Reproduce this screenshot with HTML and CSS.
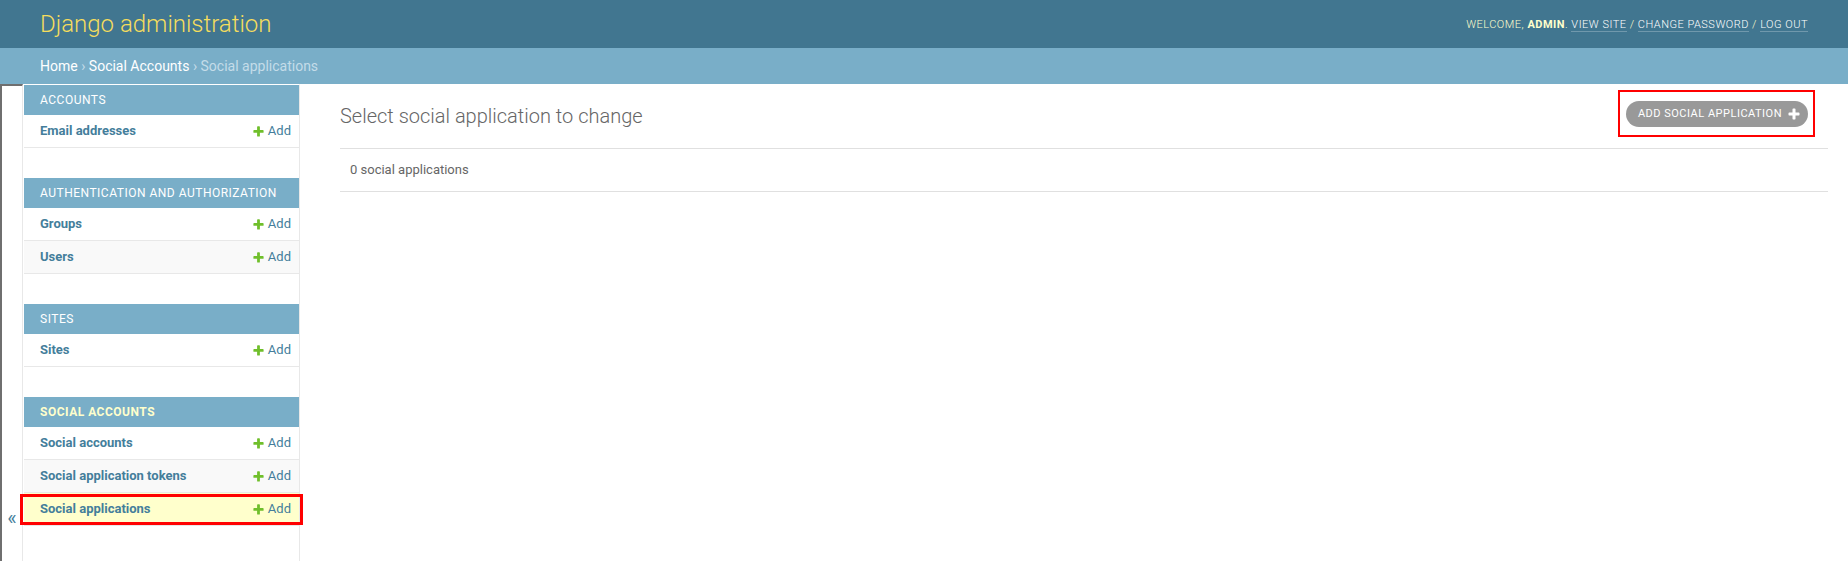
FILE: index.html
```html
<!DOCTYPE html>
<html lang="en">
<head>
<meta charset="utf-8">
<title>Select social application to change | Django site admin</title>
<link rel="stylesheet" href="styles.css">
</head>
<body>
<div class="header">
  <div class="branding">Django administration</div>
  <div class="user-tools">Welcome, <strong>admin</strong>. <a href="#">View site</a> / <a href="#">Change password</a> / <a href="#">Log out</a></div>
</div>
<div class="breadcrumbs"><a href="#">Home</a> › <a href="#">Social Accounts</a> › Social applications</div>
<div class="main">
  <button class="toggle-nav"><span class="toggle-glyph">«</span></button>
  <nav class="sidebar">
    <div class="module">
      <div class="caption">Accounts</div>
      <div class="row"><a class="model" href="#">Email addresses</a><a class="addlink" href="#"><svg class="plus" viewBox="0 0 1792 1792"><path d="M1600 796v192q0 40-28 68t-68 28h-416v416q0 40-28 68t-68 28h-192q-40 0-68-28t-28-68v-416h-416q-40 0-68-28t-28-68v-192q0-40 28-68t68-28h416v-416q0-40 28-68t68-28h192q40 0 68 28t28 68v416h416q40 0 68 28t28 68z"/></svg>Add</a></div>
    </div>
    <div class="module">
      <div class="caption">Authentication and Authorization</div>
      <div class="row"><a class="model" href="#">Groups</a><a class="addlink" href="#"><svg class="plus" viewBox="0 0 1792 1792"><path d="M1600 796v192q0 40-28 68t-68 28h-416v416q0 40-28 68t-68 28h-192q-40 0-68-28t-28-68v-416h-416q-40 0-68-28t-28-68v-192q0-40 28-68t68-28h416v-416q0-40 28-68t68-28h192q40 0 68 28t28 68v416h416q40 0 68 28t28 68z"/></svg>Add</a></div>
      <div class="row alt"><a class="model" href="#">Users</a><a class="addlink" href="#"><svg class="plus" viewBox="0 0 1792 1792"><path d="M1600 796v192q0 40-28 68t-68 28h-416v416q0 40-28 68t-68 28h-192q-40 0-68-28t-28-68v-416h-416q-40 0-68-28t-28-68v-192q0-40 28-68t68-28h416v-416q0-40 28-68t68-28h192q40 0 68 28t28 68v416h416q40 0 68 28t28 68z"/></svg>Add</a></div>
    </div>
    <div class="module">
      <div class="caption">Sites</div>
      <div class="row"><a class="model" href="#">Sites</a><a class="addlink" href="#"><svg class="plus" viewBox="0 0 1792 1792"><path d="M1600 796v192q0 40-28 68t-68 28h-416v416q0 40-28 68t-68 28h-192q-40 0-68-28t-28-68v-416h-416q-40 0-68-28t-28-68v-192q0-40 28-68t68-28h416v-416q0-40 28-68t68-28h192q40 0 68 28t28 68v416h416q40 0 68 28t28 68z"/></svg>Add</a></div>
    </div>
    <div class="module">
      <div class="caption current">Social Accounts</div>
      <div class="row"><a class="model" href="#">Social accounts</a><a class="addlink" href="#"><svg class="plus" viewBox="0 0 1792 1792"><path d="M1600 796v192q0 40-28 68t-68 28h-416v416q0 40-28 68t-68 28h-192q-40 0-68-28t-28-68v-416h-416q-40 0-68-28t-28-68v-192q0-40 28-68t68-28h416v-416q0-40 28-68t68-28h192q40 0 68 28t28 68v416h416q40 0 68 28t28 68z"/></svg>Add</a></div>
      <div class="row alt"><a class="model" href="#">Social application tokens</a><a class="addlink" href="#"><svg class="plus" viewBox="0 0 1792 1792"><path d="M1600 796v192q0 40-28 68t-68 28h-416v416q0 40-28 68t-68 28h-192q-40 0-68-28t-28-68v-416h-416q-40 0-68-28t-28-68v-192q0-40 28-68t68-28h416v-416q0-40 28-68t68-28h192q40 0 68 28t28 68v416h416q40 0 68 28t28 68z"/></svg>Add</a></div>
      <div class="row selected"><a class="model" href="#">Social applications</a><a class="addlink" href="#"><svg class="plus" viewBox="0 0 1792 1792"><path d="M1600 796v192q0 40-28 68t-68 28h-416v416q0 40-28 68t-68 28h-192q-40 0-68-28t-28-68v-416h-416q-40 0-68-28t-28-68v-192q0-40 28-68t68-28h416v-416q0-40 28-68t68-28h192q40 0 68 28t28 68v416h416q40 0 68 28t28 68z"/></svg>Add</a></div>
    </div>
  </nav>
  <div class="content">
    <div class="content-head">
      <h1>Select social application to change</h1>
      <a class="tool-add" href="#">Add social application<svg class="tool-plus" viewBox="0 0 1792 1792"><path d="M1600 796v192q0 40-28 68t-68 28h-416v416q0 40-28 68t-68 28h-192q-40 0-68-28t-28-68v-416h-416q-40 0-68-28t-28-68v-192q0-40 28-68t68-28h416v-416q0-40 28-68t68-28h192q40 0 68 28t28 68v416h416q40 0 68 28t28 68z"/></svg></a>
    </div>
    <p class="paginator">0 social applications</p>
  </div>
</div>
</body>
</html>
```
FILE: styles.css
```css
html, body {
  margin: 0;
  padding: 0;
}
body {
  font-family: Roboto, "Liberation Sans", sans-serif;
  font-size: 14px;
  color: #333;
  background: #fff;
  overflow: hidden;
}
a {
  text-decoration: none;
}
.header {
  display: flex;
  justify-content: space-between;
  align-items: center;
  padding: 10px 40px;
  background: #417690;
  color: #ffc;
}
.branding {
  font-size: 24px;
  font-weight: 300;
  color: #f5dd5d;
  line-height: 28px;
}
.user-tools {
  font-size: 11px;
  font-weight: 300;
  letter-spacing: 0.5px;
  text-transform: uppercase;
  color: #ffc;
  margin-top: 1px;
}
.user-tools strong {
  font-weight: 700;
}
.user-tools a {
  color: #fff;
  border-bottom: 1px solid rgba(255, 255, 255, 0.25);
}
.breadcrumbs {
  background: #79aec8;
  padding: 10px 40px;
  font-size: 14px;
  line-height: 16px;
  color: #c4dce8;
}
.breadcrumbs a {
  color: #fff;
}
.main {
  display: flex;
  min-height: 900px;
}
.toggle-nav {
  flex: 0 0 23px;
  width: 23px;
  box-sizing: border-box;
  margin: 0;
  padding: 421px 0 0 0;
  border: 0;
  border-left: 2px solid #6f6f6f;
  border-top: 2px solid #6f6f6f;
  border-right: 1px solid #e8e8e8;
  background: #fff;
  display: flex;
  flex-direction: column;
  align-items: center;
  font-family: Roboto, "Liberation Sans", sans-serif;
  font-size: 20px;
  line-height: 23px;
  color: #447e9b;
}
.toggle-glyph {
  display: block;
}
.sidebar {
  flex: 0 0 277px;
  box-sizing: border-box;
  padding-left: 1px;
  border-top: 1px solid transparent;
  border-right: 1px solid #e8e8e8;
}
.module {
  margin-bottom: 30px;
}
.caption {
  background: #79aec8;
  color: #fff;
  padding: 8px 16px;
  font-size: 12px;
  line-height: 14px;
  letter-spacing: 0.5px;
  text-transform: uppercase;
}
.caption.current {
  color: #ffc;
  font-weight: 700;
}
.row {
  position: relative;
  display: flex;
  justify-content: space-between;
  align-items: flex-start;
  padding: 8px 8px 8px 16px;
  font-size: 13px;
  line-height: 16px;
  border-bottom: 1px solid #e8e8e8;
  background: #fff;
}
.row.alt {
  background: #f9f9f9;
}
.row.selected {
  background: #ffc;
}
.row.selected::after {
  content: "";
  position: absolute;
  top: 1px;
  bottom: 0;
  left: -4px;
  right: -4px;
  border: 3px solid #f00;
  pointer-events: none;
}
.model {
  color: #447e9b;
  font-weight: 700;
}
.addlink {
  display: flex;
  align-items: center;
  color: #447e9b;
  white-space: nowrap;
}
.plus {
  width: 13px;
  height: 13px;
  margin-right: 3px;
  fill: #70bf2b;
}
.content {
  flex: 1 1 auto;
  padding: 20px 40px;
  min-width: 0;
}
.content-head {
  display: flex;
  justify-content: space-between;
  align-items: flex-start;
  margin-bottom: 20px;
}
h1 {
  margin: 0;
  font-size: 20px;
  font-weight: 300;
  line-height: 24px;
  color: #666;
}
.tool-add {
  position: relative;
  display: flex;
  align-items: center;
  margin-top: -3px;
  padding: 3px 7px 3px 12px;
  line-height: 20px;
  background: #999;
  color: #fff;
  border-radius: 15px;
  font-size: 11px;
  letter-spacing: 0.5px;
  text-transform: uppercase;
}
.tool-add::after {
  content: "";
  position: absolute;
  top: -11px;
  bottom: -10px;
  left: -8px;
  right: -7px;
  border: 2px solid #f00;
  pointer-events: none;
}
.tool-plus {
  width: 14px;
  height: 14px;
  margin-left: 5px;
  fill: #fff;
}
.paginator {
  margin: 0 -20px 0 0;
  padding: 10px;
  font-size: 13px;
  line-height: 22px;
  color: #666;
  border-top: 1px solid #e0e0e0;
  border-bottom: 1px solid #e0e0e0;
}
```
